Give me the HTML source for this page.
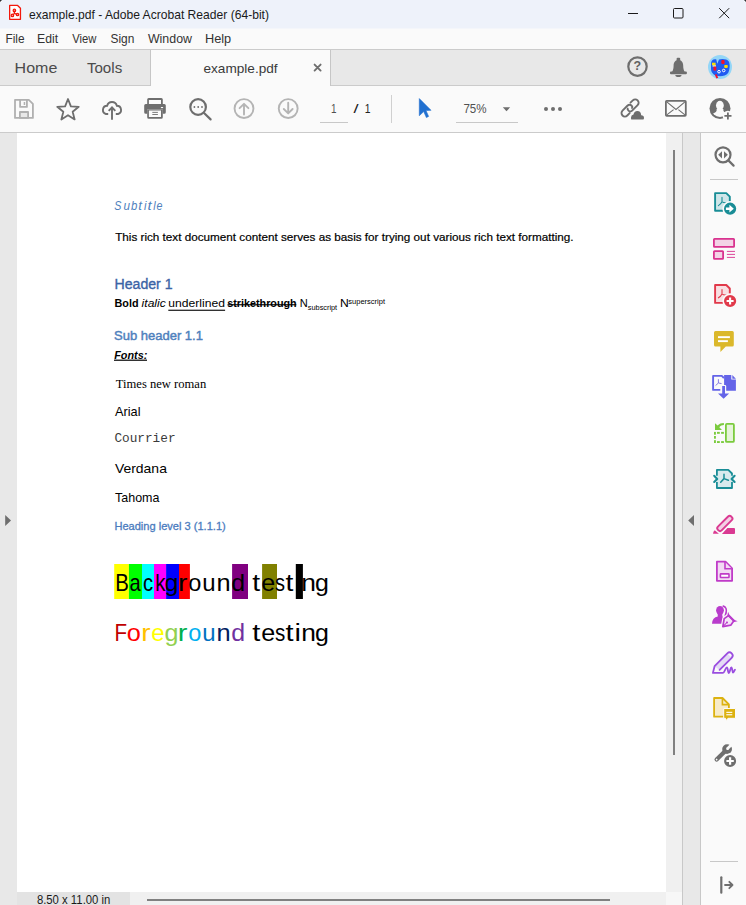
<!DOCTYPE html>
<html><head><meta charset="utf-8"><title>example.pdf - Adobe Acrobat Reader</title>
<style>html,body{margin:0;padding:0;width:746px;height:905px;overflow:hidden;background:#FAFAFA;font-family:"Liberation Sans",sans-serif}svg{position:absolute;left:0;top:0;display:block}</style>
</head><body>
<svg width="746" height="905" viewBox="0 0 746 905">
<g shape-rendering="crispEdges">
<rect x="0" y="0" width="746" height="28" fill="#EEF2FA" />
<rect x="0" y="28" width="746" height="1" fill="#F4F6FA" />
<rect x="0" y="29" width="746" height="20" fill="#FAFAFA" />
<rect x="0" y="49" width="746" height="1" fill="#CBCBCB" />
<rect x="0" y="50" width="746" height="35" fill="#E8E8E8" />
<rect x="0" y="85" width="746" height="1" fill="#CBCBCB" />
<rect x="150" y="50" width="1" height="36" fill="#C6C6C6" />
<rect x="151" y="50" width="179" height="36" fill="#FAFAFA" />
<rect x="330" y="50" width="1" height="36" fill="#C6C6C6" />
<rect x="0" y="86" width="746" height="46" fill="#FAFAFA" />
<rect x="0" y="132" width="746" height="1" fill="#CBCBCB" />
<rect x="0" y="133" width="17" height="772" fill="#E8E8E8" />
<rect x="17" y="133" width="649" height="759" fill="#FFFFFF" />
<rect x="666" y="133" width="16" height="772" fill="#F0F0F0" />
<rect x="682" y="133" width="1" height="772" fill="#C8C8C8" />
<rect x="683" y="133" width="17" height="772" fill="#E8E8E8" />
<rect x="700" y="133" width="1" height="772" fill="#C8C8C8" />
<rect x="701" y="133" width="45" height="772" fill="#FAFAFA" />
<rect x="17" y="892" width="113" height="13" fill="#E3E3E3" />
<rect x="130" y="892" width="536" height="13" fill="#F0F0F0" />
<rect x="666" y="892" width="16" height="13" fill="#F7F7F7" />
<rect x="673" y="150" width="2" height="605" fill="#808080" />
<rect x="147" y="899" width="463" height="2" fill="#808080" />
<rect x="320" y="122" width="28" height="1" fill="#C8C8C8" />
<rect x="456" y="122" width="62" height="1" fill="#C8C8C8" />
<rect x="391" y="95" width="1" height="28" fill="#D0D0D0" />
<rect x="710" y="179" width="28" height="1" fill="#C8C8C8" />
<rect x="710" y="861" width="28" height="1" fill="#C8C8C8" />
<rect x="0" y="0" width="1" height="1" fill="#303030" />
<rect x="1" y="0" width="1" height="1" fill="#8A8C90" />
<rect x="0" y="1" width="1" height="1" fill="#8A8C90" />
<rect x="1" y="1" width="1" height="1" fill="#FBFCFF" />
<rect x="745" y="0" width="1" height="1" fill="#303030" />
<rect x="744" y="0" width="1" height="1" fill="#8A8C90" />
<rect x="745" y="1" width="1" height="1" fill="#8A8C90" />
<rect x="744" y="1" width="1" height="1" fill="#FBFCFF" />
</g>
<g fill="none" stroke="#F2180C" stroke-width="1.3" stroke-linejoin="round"><path d="M9.65,5.45 H17.6 L20.45,8.3 V19.35 H9.65 Z" fill="#fff"/></g>
<g stroke="#F2180C" stroke-width="1.3" fill="none"><path d="M14.4,13.4 L14.4,10.4 M14.4,13.4 L12.5,15.4 M14.4,13.4 L17.4,14.5"/><circle cx="14.4" cy="10.4" r="1.2"/><circle cx="12.4" cy="15.4" r="1.2"/><circle cx="17.5" cy="14.5" r="1.2"/></g>
<text x="28.92" y="18.60" font-family="Liberation Sans" font-size="12.46" fill="#1A1A1A" textLength="240.07" lengthAdjust="spacingAndGlyphs" >example.pdf - Adobe Acrobat Reader (64-bit)</text>
<g stroke="#1A1A1A" stroke-width="1" fill="none"><path d="M628,13.5 H638"/><rect x="673.5" y="8.5" width="9.5" height="9.5" rx="1"/><path d="M719.2,8.2 L729.2,18.2 M729.2,8.2 L719.2,18.2"/></g>
<text x="5.45" y="42.90" font-family="Liberation Sans" font-size="12.03" fill="#333333" textLength="19.10" lengthAdjust="spacingAndGlyphs" >File</text>
<text x="37.02" y="42.90" font-family="Liberation Sans" font-size="12.03" fill="#333333" textLength="21.08" lengthAdjust="spacingAndGlyphs" >Edit</text>
<text x="72.34" y="42.90" font-family="Liberation Sans" font-size="12.03" fill="#333333" textLength="24.15" lengthAdjust="spacingAndGlyphs" >View</text>
<text x="110.46" y="42.90" font-family="Liberation Sans" font-size="12.03" fill="#333333" textLength="23.83" lengthAdjust="spacingAndGlyphs" >Sign</text>
<text x="147.94" y="42.90" font-family="Liberation Sans" font-size="12.03" fill="#333333" textLength="44.02" lengthAdjust="spacingAndGlyphs" >Window</text>
<text x="204.98" y="42.90" font-family="Liberation Sans" font-size="12.03" fill="#333333" textLength="26.25" lengthAdjust="spacingAndGlyphs" >Help</text>
<text x="14.62" y="72.90" font-family="Liberation Sans" font-size="15.36" fill="#4B4B4B" textLength="42.74" lengthAdjust="spacingAndGlyphs" >Home</text>
<text x="86.90" y="72.90" font-family="Liberation Sans" font-size="15.36" fill="#4B4B4B" textLength="35.33" lengthAdjust="spacingAndGlyphs" >Tools</text>
<text x="203.46" y="72.50" font-family="Liberation Sans" font-size="13.33" fill="#3A3A3A" textLength="74.12" lengthAdjust="spacingAndGlyphs" >example.pdf</text>
<path d="M314.6,64.6 L320.6,70.6 M320.6,64.6 L314.6,70.6" stroke="#6E6E6E" stroke-width="1.9" stroke-linecap="round"/>
<circle cx="637.5" cy="66.6" r="9.2" fill="none" stroke="#6E6E6E" stroke-width="2.2"/>
<text x="633.64" y="70.40" font-family="Liberation Sans" font-size="11.88" font-weight="bold" fill="#606060" textLength="7.67" lengthAdjust="spacingAndGlyphs" >?</text>
<g fill="#6E6E6E"><rect x="676.6" y="57.8" width="3.6" height="3" rx="1"/><path d="M671.8,72.5 C673.3,70.5 673.6,67.5 673.6,65.5 C673.6,61.8 675.6,59.9 678.4,59.9 C681.2,59.9 683.2,61.8 683.2,65.5 C683.2,67.5 683.5,70.5 685,72.5 Z"/><rect x="670" y="71.4" width="16.9" height="2.8" rx="1"/><path d="M675.3,75 H681.5 A3.1,2 0 0 1 675.3,75 Z"/></g>
<g><circle cx="720" cy="67" r="12" fill="#94D6F7"/><path d="M711,64 C711,61 712.5,59.2 715,59.2 L716.2,59.2 L717.3,63.8 L719,59.6 C722,58.6 727,59 728.8,61.5 C730.2,64 729.9,70 728.1,73 C726,75.6 722,76.6 718,76.1 C714,75.6 711.2,73 711,69 Z" fill="#1F5BF2"/><rect x="712" y="62.7" width="3.6" height="2.6" fill="#FFE000"/><rect x="712.6" y="65.3" width="3.4" height="1.4" fill="#FFFFB0"/><rect x="713.5" y="66.6" width="2.8" height="4" fill="#F5102A"/><rect x="721.3" y="60" width="3.3" height="4" rx="1" fill="#F5102A"/><rect x="724.2" y="65.1" width="3.6" height="2.8" rx="0.8" fill="#FFDA00"/><path d="M715.7,74.3 L717.3,78.2" stroke="#F5102A" stroke-width="1.9"/><circle cx="719" cy="71.7" r="1.3" fill="none" stroke="#fff" stroke-width="1"/><circle cx="723.7" cy="70.5" r="1.3" fill="none" stroke="#fff" stroke-width="1"/></g>
<g fill="none" stroke="#B0B0B0" stroke-width="1.8" stroke-linejoin="round"><path d="M15,99.8 H28.8 L32.9,103.9 V117.9 H15 Z"/><path d="M20.1,99.8 V106.9 H26.9 V99.8"/><rect x="19.9" y="112" width="8.2" height="5.9" fill="#E8E8E8"/></g>
<rect x="23.7" y="102" width="1.5" height="3" fill="#B0B0B0"/>
<path d="M68.00,99.00 L70.88,106.34 L78.75,106.81 L72.66,111.81 L74.64,119.44 L68.00,115.20 L61.36,119.44 L63.34,111.81 L57.25,106.81 L65.12,106.34 Z" fill="none" stroke="#6E6E6E" stroke-width="1.8" stroke-linejoin="round"/>
<g stroke="#6E6E6E" stroke-width="1.9" fill="none" stroke-linecap="butt"><path d="M108.2,114 H105.9 A4.2,4.2 0 0 1 107.14,105.79 A5,5 0 0 1 116.86,105.79 A4.2,4.2 0 0 1 118.1,114 H115.8"/><path d="M112,119.8 V107.3 M108.7,110.8 L112,107.3 L115.3,110.8" stroke-linejoin="miter"/></g>
<g fill="#6E6E6E"><path d="M147.2,104.5 V99.5 Q147.2,98 148.7,98 H161.3 Q162.8,98 162.8,99.5 V104.5 H161 V99.9 H148.9 V104.5 Z"/><path d="M145.7,104 H164.3 Q165.8,104 165.8,105.5 V112.3 Q165.8,113.8 164.3,113.8 H162.8 V109.6 H147.2 V113.8 H145.7 Q144.2,113.8 144.2,112.3 V105.5 Q144.2,104 145.7,104 Z"/><path d="M147.2,109.6 H162.8 V117.3 Q162.8,118.8 161.3,118.8 H148.7 Q147.2,118.8 147.2,117.3 Z M148.9,110.6 V117 H161 V110.6 Z" fill-rule="evenodd"/><rect x="152.3" y="111.9" width="5.6" height="0.9"/><rect x="152.3" y="114" width="5.6" height="0.9"/></g>
<rect x="160.9" y="107" width="2.2" height="1.1" fill="#FAFAFA"/>
<g stroke="#6E6E6E" stroke-width="2.2" fill="none" stroke-linecap="round"><circle cx="198.1" cy="107" r="7.8"/><path d="M204.3,113.3 L210.6,119.4"/></g>
<g fill="#6E6E6E"><circle cx="194.4" cy="107" r="0.9"/><circle cx="198.2" cy="107" r="0.9"/><circle cx="202" cy="107" r="0.9"/></g>
<g stroke="#B4B4B4" stroke-width="1.9" fill="none"><circle cx="244" cy="108.6" r="9.45"/><path d="M244,114.5 V104.2 M239.6,108.2 L244,103.8 L248.4,108.2" stroke-linecap="round" stroke-linejoin="round"/><circle cx="288.2" cy="108.6" r="9.45"/><path d="M288.2,102.7 V113 M283.8,109 L288.2,113.4 L292.6,109" stroke-linecap="round" stroke-linejoin="round"/></g>
<text x="330.96" y="113.30" font-family="Liberation Sans" font-size="13.04" fill="#505050" textLength="5.50" lengthAdjust="spacingAndGlyphs" >1</text>
<text x="353.40" y="113.30" font-family="Liberation Sans" font-size="13.04" fill="#222" textLength="5.06" lengthAdjust="spacingAndGlyphs" >/</text>
<text x="364.72" y="113.30" font-family="Liberation Sans" font-size="13.04" fill="#222" textLength="5.75" lengthAdjust="spacingAndGlyphs" >1</text>
<path d="M419.3,98.6 L431,110.3 L426,110.6 L428.6,116.4 L426.4,117.6 L423.7,111.6 L419.3,115.7 Z" fill="#2170D0" stroke="#2170D0" stroke-width="0.6" stroke-linejoin="round"/>
<text x="463.42" y="113.30" font-family="Liberation Sans" font-size="13.04" fill="#505050" textLength="23.20" lengthAdjust="spacingAndGlyphs" >75%</text>
<path d="M502.8,107.2 H510.2 L506.5,111.2 Z" fill="#6E6E6E"/>
<g fill="#6E6E6E"><circle cx="546" cy="109" r="2"/><circle cx="553" cy="109" r="2"/><circle cx="560" cy="109" r="2"/></g>
<g transform="translate(630.06,107.9) rotate(-45)" fill="none" stroke="#6E6E6E" stroke-width="1.9" stroke-linecap="round"><path d="M4,-3.4 H7.3 A3.4,3.4 0 0 1 7.3,3.4 H-0.5 C-2.2,3.4 -3.1,2.2 -3.0,0.8 C-3.0,-0.3 -2.7,-1.1 -2.2,-1.2"/><path d="M-4,3.4 H-7.3 A3.4,3.4 0 0 1 -7.3,-3.4 H-0.4 C1.5,-3.4 2.7,-2.0 2.7,-0.4 C2.7,0.7 2.1,1.3 1.4,1.4"/></g>
<path d="M631.3,119.6 H643 Q644,119.6 644,118 Q644,115.5 641.2,115.3 Q641,111 637.3,111 Q634.2,111 633.5,114.5 Q631,114.8 631,117.5 Q631,119.6 631.3,119.6 Z" fill="#FAFAFA" stroke="#FAFAFA" stroke-width="2.6"/>
<path d="M631.3,119.6 H643 Q644,119.6 644,118 Q644,115.5 641.2,115.3 Q641,111 637.3,111 Q634.2,111 633.5,114.5 Q631,114.8 631,117.5 Q631,119.6 631.3,119.6 Z" fill="#6E6E6E"/>
<g fill="none" stroke="#6E6E6E"><rect x="665.9" y="100.9" width="19.9" height="14.9" rx="0.8" stroke-width="1.8"/><path d="M666.8,101.8 L676,109.5 L684.9,101.8 M666.8,114.9 L673.6,109.6 M684.9,114.9 L678.4,109.6" stroke-width="1.1"/></g>
<defs><clipPath id="pc"><circle cx="720" cy="108.5" r="8.5"/></clipPath></defs>
<circle cx="720" cy="108.5" r="10.5" fill="#6E6E6E"/>
<g fill="#FAFAFA" clip-path="url(#pc)"><ellipse cx="719.9" cy="105.5" rx="3.9" ry="4.7"/><path d="M716.5,109 Q717.5,112 713,113.5 Q709,115 709,120 H731 Q731,115 727,113.5 Q722.5,112 723.5,109 Z"/></g>
<circle cx="727.9" cy="115.9" r="5.2" fill="#FAFAFA"/>
<path d="M724.4,115.9 H731.5 M727.9,112.4 V119.5" stroke="#6E6E6E" stroke-width="1.8"/>
<path d="M5.2,515 L11,520.5 L5.2,526 Z" fill="#6E6E6E"/>
<path d="M694,515 L688.2,520.5 L694,526 Z" fill="#6E6E6E"/>
<g stroke="#6E6E6E" stroke-width="2.2" fill="none" stroke-linecap="round"><circle cx="723" cy="154.8" r="7.5"/><path d="M728.6,160.6 L733.6,165.6"/></g>
<g fill="#6E6E6E"><path d="M722,151.2 V158.4 L718.2,154.8 Z"/><path d="M724,151.2 V158.4 L727.8,154.8 Z"/></g>
<path d="M715.1,193.1 H726.3 L729.8,196.6 V210.7 H715.1 Z" fill="#CFE6E9" stroke="#198D96" stroke-width="1.9" stroke-linejoin="round"/>
<path d="M722,197.4 V201.8 C721.2,203.4 719.9,204.7 718.4,205.6 M722.2,201.9 C723.5,202.8 725,203 726.6,202.6" fill="none" stroke="#198D96" stroke-width="1.1" stroke-linecap="round"/>
<circle cx="730.1" cy="208.7" r="6.9" fill="#198D96" stroke="#FAFAFA" stroke-width="1.6"/>
<path d="M725.9,207.5 H729.4 V204.8 L733.8,208.7 L729.4,212.6 V209.9 H725.9 Z" fill="#fff"/>
<g stroke="#D9338F" stroke-width="1.8" fill="#F3D3E6"><rect x="713.9" y="238.8" width="20.2" height="8" rx="0.6"/><rect x="713.9" y="251.2" width="9.2" height="7.7" rx="0.6"/></g>
<g fill="#D9338F"><rect x="726.9" y="250.9" width="8.1" height="0.9"/><rect x="726.9" y="253.9" width="8.1" height="0.9"/><rect x="726.9" y="256.9" width="8.1" height="0.9"/></g>
<path d="M715.1,285 H726.3 L729.8,288.5 V302.9 H715.1 Z" fill="#F8DFE2" stroke="#E1394A" stroke-width="1.9" stroke-linejoin="round"/>
<path d="M722,289.5 V294 C721.2,295.6 719.9,296.9 718.4,297.8 M722.2,294.1 C723.5,295 725,295.2 726.6,294.8" fill="none" stroke="#E1394A" stroke-width="1.1" stroke-linecap="round"/>
<circle cx="730.1" cy="301" r="6.9" fill="#E1394A" stroke="#FAFAFA" stroke-width="1.6"/>
<path d="M726.6,301 H733.6 M730.1,297.5 V304.5" stroke="#fff" stroke-width="2.1"/>
<path d="M715.5,331 H732.3 Q733.8,331 733.8,332.5 V345.1 Q733.8,346.6 732.3,346.6 H725.8 L720.4,352 V346.6 H715.5 Q714,346.6 714,345.1 V332.5 Q714,331 715.5,331 Z" fill="#DBB82B"/>
<g fill="#fff"><rect x="718" y="336.2" width="11.9" height="1.9"/><rect x="718" y="340.2" width="9.9" height="1.9"/></g>
<path d="M720.3,389.9 H713.1 V375.9 H721.8 L723.9,378" fill="none" stroke="#6464E8" stroke-width="1.9" stroke-linejoin="round"/>
<path d="M718.4,379.2 V383 L715.6,385.5 M718.4,383 L721.6,383.6" fill="none" stroke="#7A6FE0" stroke-width="0.9"/>
<path d="M724.1,374.9 H731.3 V379.5 H735.9 V390.8 H724.1 Z" fill="#6464E8"/>
<path d="M732.3,374.9 L735.9,378.7 H732.3 Z" fill="#6464E8"/>
<path d="M722.2,386.1 H725 V393.4 H729.1 L723.6,398.8 L718,393.4 H722.2 Z" fill="#FAFAFA" stroke="#FAFAFA" stroke-width="2.4" stroke-linejoin="round"/>
<path d="M722.2,386.1 H725 V393.4 H729.1 L723.6,398.8 L718,393.4 H722.2 Z" fill="#6464E8"/>
<rect x="725.9" y="423.9" width="8" height="18" rx="1" fill="#E6F4DA" stroke="#7BCB3E" stroke-width="1.8"/>
<g fill="#7BCB3E"><rect x="714" y="431.9" width="1.9" height="2.8"/><rect x="714" y="436" width="1.9" height="2.7"/><rect x="714" y="440.2" width="1.9" height="2.8"/><rect x="717" y="431.9" width="2.8" height="1.9"/><rect x="721.1" y="431.9" width="2.8" height="1.9"/><rect x="717" y="441.1" width="2.8" height="1.9"/><rect x="721.1" y="441.1" width="2.8" height="1.9"/><path d="M715,423.2 L717.6,425.6 C719.2,423.9 721.2,423.1 723.9,423.1 V424.9 C722,424.9 720.4,425.7 719.3,427.3 L722,430 H715 Z"/></g>
<path d="M716.9,469.7 H728.3 L732.1,473.5 V487.9 H716.9 Z" fill="#D8EAED"/>
<g fill="none" stroke="#198D96" stroke-width="1.8" stroke-linejoin="round"><path d="M716.9,475.8 V469.8 H728.3 L732,473.5 V475.8"/><path d="M716.9,482 V488 H732 V482"/></g>
<path d="M724,474.3 V478.6 L720.7,482.3 M724,478.6 L728.4,480.2" fill="none" stroke="#198D96" stroke-width="1.5" stroke-linecap="round"/>
<g fill="none" stroke="#198D96" stroke-width="2.1" stroke-linecap="round" stroke-linejoin="round"><path d="M714.2,475.8 L717.2,478.9 L714.2,482"/><path d="M734.6,475.8 L731.6,478.9 L734.6,482"/></g>
<g transform="translate(725,523.3) rotate(-45)"><rect x="-9.6" y="-2.6" width="18.8" height="5.2" rx="2.2" fill="#F3D0E4" stroke="#DA3A92" stroke-width="1.9"/></g>
<path d="M713,533.8 Q713.2,531.5 714.7,530.2 L718.9,533.8 Z" fill="#DA3A92"/>
<path d="M727.4,528 H734 Q735,528 735,529 V533 Q735,534 734,534 H721.9 Z" fill="#DA3A92"/>
<path d="M716.9,561.7 H725.5 L732.1,568.3 V580.8 H716.9 Z" fill="#F2DAF3" stroke="#C03BC8" stroke-width="1.8" stroke-linejoin="round"/>
<path d="M725,562 V568.8 H731.8" fill="#F2DAF3" stroke="#C03BC8" stroke-width="1.6"/>
<rect x="720.4" y="573.9" width="8.6" height="3.6" rx="0.5" fill="#fff" stroke="#C03BC8" stroke-width="1.6"/>
<g fill="#B93CCC"><ellipse cx="720" cy="610.3" rx="3.9" ry="4.4"/><path d="M717.6,613 L717.8,616.6 Q712.3,617.6 712,623.7 H722.6 L725.3,617.6 Q723,617 722.3,616.6 L722.4,613 Z"/></g>
<path d="M723.3,606.1 C725.9,606.8 726.8,609.8 726.1,612.6 C725.7,614.1 725.3,615.2 725.3,616.4" fill="none" stroke="#FAFAFA" stroke-width="3"/>
<path d="M723.3,606.1 C725.9,606.8 726.8,609.8 726.1,612.6 C725.7,614.1 725.3,615.2 725.3,616.4" fill="none" stroke="#B93CCC" stroke-width="1.7" stroke-linecap="round"/>
<g transform="translate(727.9,621.5) rotate(45)"><path d="M0,7.2 L-4.6,0.6 L-3.7,-5 H3.7 L4.6,0.6 Z" fill="#FAFAFA" stroke="#FAFAFA" stroke-width="4"/><path d="M0,7.2 L-4.6,0.6 L-3.7,-5 H3.7 L4.6,0.6 Z" fill="#F6E6F8" stroke="#B93CCC" stroke-width="1.7" stroke-linejoin="round"/><path d="M0,6.5 V2.2" stroke="#B93CCC" stroke-width="1"/><circle cx="0" cy="1.3" r="1" fill="#B93CCC"/><path d="M-5.4,-5.9 L-3.3,-5 H3.3 L5.4,-5.9 L4.2,-4.2 H-4.2 Z" fill="#B93CCC" stroke="#B93CCC" stroke-width="1"/></g>
<path d="M714.6,666.2 L727.3,653.4 L731.7,657.8 L719.6,669.9 Z" fill="#E4DAF5"/>
<path d="M719.6,669.9 L731.7,657.8 A3.1,3.1 0 0 0 727.3,653.4 L714.6,666.2 L712.9,672.9 H723 C724.5,672.9 725.5,667.4 726.9,667.4 C728,667.4 727.8,673 728.8,673 C730,673 730.2,667.4 731.4,667.4 C732.4,667.4 732.2,672.6 733,672.6 C733.8,672.6 734.3,670.3 735,669.8" fill="none" stroke="#9A4DE0" stroke-width="1.8" stroke-linecap="round" stroke-linejoin="round"/>
<path d="M714.1,698 H722.5 L728.9,704.4 V716.7 H714.1 Z" fill="#F7EBC8" stroke="#DCB210" stroke-width="1.8" stroke-linejoin="round"/>
<path d="M722.4,698.3 V704.6 H728.6" fill="none" stroke="#DCB210" stroke-width="1.6"/>
<path d="M723.7,708.5 H735.5 V718.3 H728 L725.5,721 V718.3 H723.7 Z" fill="#DCB210" stroke="#FAFAFA" stroke-width="1"/>
<g fill="#fff"><rect x="726.3" y="711.8" width="6" height="1.1"/><rect x="726.3" y="714.2" width="6" height="1.1"/></g>
<g transform="translate(727.1,749.1) rotate(-45)"><circle cx="0" cy="0" r="4.9" fill="#6E6E6E"/><rect x="-16.9" y="-2.1" width="15" height="4.2" rx="2.1" fill="#6E6E6E"/><rect x="0.4" y="-1.35" width="6" height="2.7" fill="#FAFAFA"/><circle cx="0.6" cy="0" r="1.35" fill="#FAFAFA"/><circle cx="-14.8" cy="0" r="0.9" fill="#FAFAFA"/></g>
<circle cx="730.1" cy="761" r="6.8" fill="#6E6E6E" stroke="#FAFAFA" stroke-width="1.6"/>
<path d="M726.4,761 H733.8 M730.1,757.3 V764.7" stroke="#fff" stroke-width="2.2"/>
<g stroke="#6E6E6E" fill="none"><path d="M721.3,877.3 V892.7" stroke-width="2.2" stroke-linecap="round"/><path d="M725,885 H732.5 M729.3,881.8 L732.5,885 L729.3,888.2" stroke-width="1.8" stroke-linecap="round" stroke-linejoin="round"/></g>
<text x="114.33" y="210.4" font-family="Liberation Sans" font-size="12.60" font-style="italic" fill="#4F81BD" textLength="7.14" lengthAdjust="spacingAndGlyphs">S</text>
<text x="123.43" y="210.4" font-family="Liberation Sans" font-size="12.60" font-style="italic" fill="#4F81BD" textLength="6.52" lengthAdjust="spacingAndGlyphs">u</text>
<text x="131.03" y="210.4" font-family="Liberation Sans" font-size="12.60" font-style="italic" fill="#4F81BD" textLength="6.33" lengthAdjust="spacingAndGlyphs">b</text>
<text x="138.20" y="210.4" font-family="Liberation Sans" font-size="12.60" font-style="italic" fill="#4F81BD" textLength="3.70" lengthAdjust="spacingAndGlyphs">t</text>
<text x="144.03" y="210.4" font-family="Liberation Sans" font-size="12.60" font-style="italic" fill="#4F81BD" textLength="2.51" lengthAdjust="spacingAndGlyphs">i</text>
<text x="147.53" y="210.4" font-family="Liberation Sans" font-size="12.60" font-style="italic" fill="#4F81BD" textLength="4.12" lengthAdjust="spacingAndGlyphs">t</text>
<text x="153.14" y="210.4" font-family="Liberation Sans" font-size="12.60" font-style="italic" fill="#4F81BD" textLength="2.42" lengthAdjust="spacingAndGlyphs">l</text>
<text x="156.48" y="210.4" font-family="Liberation Sans" font-size="12.60" font-style="italic" fill="#4F81BD" textLength="5.96" lengthAdjust="spacingAndGlyphs">e</text>
<text x="115.17" y="240.70" font-family="Liberation Sans" font-size="11.45" fill="#000" textLength="458.43" lengthAdjust="spacingAndGlyphs"  stroke="#000" stroke-width="0.2">This rich text document content serves as basis for trying out various rich text formatting.</text>
<text x="114.47" y="289.10" font-family="Liberation Sans" font-size="14.49" fill="#3A63A5" textLength="58.15" lengthAdjust="spacingAndGlyphs"  stroke="#3A63A5" stroke-width="0.35">Header 1</text>
<text x="114.50" y="307.40" font-family="Liberation Sans" font-size="10.87" font-weight="bold" fill="#000" textLength="24.02" lengthAdjust="spacingAndGlyphs" >Bold</text>
<text x="141.62" y="307.40" font-family="Liberation Sans" font-size="10.87" font-style="italic" fill="#000" textLength="24.11" lengthAdjust="spacingAndGlyphs" >italic</text>
<text x="168.31" y="307.40" font-family="Liberation Sans" font-size="10.87" fill="#000" textLength="56.58" lengthAdjust="spacingAndGlyphs" >underlined</text>
<rect x="168.3" y="309.7" width="56.79999999999998" height="1.1000000000000227" fill="#000" />
<text x="227.32" y="307.40" font-family="Liberation Sans" font-size="10.87" font-weight="bold" fill="#000" textLength="69.32" lengthAdjust="spacingAndGlyphs" >strikethrough</text>
<rect x="227.5" y="304.2" width="68.80000000000001" height="1.1000000000000227" fill="#000" />
<text x="299.71" y="307.40" font-family="Liberation Sans" font-size="10.87" fill="#000" textLength="8.00" lengthAdjust="spacingAndGlyphs" >N</text>
<text x="307.88" y="310.00" font-family="Liberation Sans" font-size="7.25" fill="#000" textLength="29.27" lengthAdjust="spacingAndGlyphs" >subscript</text>
<text x="340.03" y="307.40" font-family="Liberation Sans" font-size="10.87" fill="#000" textLength="8.77" lengthAdjust="spacingAndGlyphs" >N</text>
<text x="348.27" y="304.00" font-family="Liberation Sans" font-size="7.25" fill="#000" textLength="36.77" lengthAdjust="spacingAndGlyphs" >superscript</text>
<text x="114.01" y="339.90" font-family="Liberation Sans" font-size="13.04" fill="#4F81BD" textLength="88.96" lengthAdjust="spacingAndGlyphs"  stroke="#4F81BD" stroke-width="0.45">Sub header 1.1</text>
<text x="114.18" y="358.70" font-family="Liberation Sans" font-size="11.30" font-weight="bold" font-style="italic" fill="#000" textLength="33.11" lengthAdjust="spacingAndGlyphs" >Fonts:</text>
<rect x="114" y="359.6" width="33" height="1.1999999999999886" fill="#000" />
<text x="115.85" y="388.00" font-family="Liberation Serif" font-size="12.82" fill="#000" textLength="90.34" lengthAdjust="spacingAndGlyphs" >Times new roman</text>
<text x="115.10" y="416.00" font-family="Liberation Sans" font-size="13.04" fill="#000" textLength="25.43" lengthAdjust="spacingAndGlyphs" >Arial</text>
<text x="114.40" y="442.00" font-family="Liberation Mono" font-size="12.58" fill="#3A3A3A" textLength="61.16" lengthAdjust="spacingAndGlyphs" >Courrier</text>
<text x="114.93" y="473.00" font-family="Liberation Sans" font-size="13.04" fill="#000" textLength="51.98" lengthAdjust="spacingAndGlyphs" >Verdana</text>
<text x="115.05" y="502.00" font-family="Liberation Sans" font-size="13.04" fill="#000" textLength="44.38" lengthAdjust="spacingAndGlyphs" >Tahoma</text>
<text x="114.41" y="530.00" font-family="Liberation Sans" font-size="11.45" fill="#4A7BBE" textLength="111.37" lengthAdjust="spacingAndGlyphs"  stroke="#4A7BBE" stroke-width="0.3">Heading level 3 (1.1.1)</text>
<rect x="114.2" y="564" width="14.7" height="35" fill="#FFFF00"/>
<rect x="128.9" y="564" width="13.1" height="35" fill="#00FF00"/>
<rect x="142" y="564" width="12.0" height="35" fill="#00FFFF"/>
<rect x="154" y="564" width="12.1" height="35" fill="#FF00FF"/>
<rect x="166.1" y="564" width="12.9" height="35" fill="#0000FF"/>
<rect x="179" y="564" width="10.9" height="35" fill="#FF0000"/>
<rect x="232.1" y="564" width="15.9" height="35" fill="#800080"/>
<rect x="262.1" y="564" width="14.9" height="35" fill="#808000"/>
<rect x="295.8" y="564" width="7.1" height="35" fill="#000000"/>
<text x="115.17" y="590.7" font-family="Liberation Sans" font-size="23.6" fill="#000" textLength="13.59" lengthAdjust="spacingAndGlyphs">B</text>
<text x="129.58" y="590.7" font-family="Liberation Sans" font-size="23.6" fill="#000" textLength="11.16" lengthAdjust="spacingAndGlyphs">a</text>
<text x="142.99" y="590.7" font-family="Liberation Sans" font-size="23.6" fill="#000" textLength="10.11" lengthAdjust="spacingAndGlyphs">c</text>
<text x="155.27" y="590.7" font-family="Liberation Sans" font-size="23.6" fill="#000" textLength="10.23" lengthAdjust="spacingAndGlyphs">k</text>
<text x="164.60" y="590.7" font-family="Liberation Sans" font-size="23.6" fill="#000" textLength="13.97" lengthAdjust="spacingAndGlyphs">g</text>
<text x="177.97" y="590.7" font-family="Liberation Sans" font-size="23.6" fill="#000" textLength="9.43" lengthAdjust="spacingAndGlyphs">r</text>
<text x="188.36" y="590.7" font-family="Liberation Sans" font-size="23.6" fill="#000" textLength="13.11" lengthAdjust="spacingAndGlyphs">o</text>
<text x="202.24" y="590.7" font-family="Liberation Sans" font-size="23.6" fill="#000" textLength="13.35" lengthAdjust="spacingAndGlyphs">u</text>
<text x="216.55" y="590.7" font-family="Liberation Sans" font-size="23.6" fill="#000" textLength="14.13" lengthAdjust="spacingAndGlyphs">n</text>
<text x="231.20" y="590.7" font-family="Liberation Sans" font-size="23.6" fill="#000" textLength="13.84" lengthAdjust="spacingAndGlyphs">d</text>
<text x="252.36" y="590.7" font-family="Liberation Sans" font-size="23.6" fill="#000" textLength="7.87" lengthAdjust="spacingAndGlyphs">t</text>
<text x="261.30" y="590.7" font-family="Liberation Sans" font-size="23.6" fill="#000" textLength="13.96" lengthAdjust="spacingAndGlyphs">e</text>
<text x="275.04" y="590.7" font-family="Liberation Sans" font-size="23.6" fill="#000" textLength="10.03" lengthAdjust="spacingAndGlyphs">s</text>
<text x="285.61" y="590.7" font-family="Liberation Sans" font-size="23.6" fill="#000" textLength="7.87" lengthAdjust="spacingAndGlyphs">t</text>
<text x="294.58" y="590.7" font-family="Liberation Sans" font-size="23.6" fill="#000" textLength="6.29" lengthAdjust="spacingAndGlyphs">i</text>
<text x="301.39" y="590.7" font-family="Liberation Sans" font-size="23.6" fill="#000" textLength="14.66" lengthAdjust="spacingAndGlyphs">n</text>
<text x="315.00" y="590.7" font-family="Liberation Sans" font-size="23.6" fill="#000" textLength="13.84" lengthAdjust="spacingAndGlyphs">g</text>
<text x="114.51" y="641" font-family="Liberation Sans" font-size="24.2" fill="#C00000" textLength="12.57" lengthAdjust="spacingAndGlyphs">F</text>
<text x="126.89" y="641" font-family="Liberation Sans" font-size="24.2" fill="#FF0000" textLength="14.05" lengthAdjust="spacingAndGlyphs">o</text>
<text x="141.28" y="641" font-family="Liberation Sans" font-size="24.2" fill="#FFC000" textLength="9.33" lengthAdjust="spacingAndGlyphs">r</text>
<text x="151.24" y="641" font-family="Liberation Sans" font-size="24.2" fill="#FFFF00" textLength="13.37" lengthAdjust="spacingAndGlyphs">e</text>
<text x="164.60" y="641" font-family="Liberation Sans" font-size="24.2" fill="#92D050" textLength="13.97" lengthAdjust="spacingAndGlyphs">g</text>
<text x="177.83" y="641" font-family="Liberation Sans" font-size="24.2" fill="#00B050" textLength="9.67" lengthAdjust="spacingAndGlyphs">r</text>
<text x="188.36" y="641" font-family="Liberation Sans" font-size="24.2" fill="#00B0F0" textLength="13.11" lengthAdjust="spacingAndGlyphs">o</text>
<text x="202.24" y="641" font-family="Liberation Sans" font-size="24.2" fill="#0070C0" textLength="13.35" lengthAdjust="spacingAndGlyphs">u</text>
<text x="216.55" y="641" font-family="Liberation Sans" font-size="24.2" fill="#002060" textLength="14.13" lengthAdjust="spacingAndGlyphs">n</text>
<text x="231.20" y="641" font-family="Liberation Sans" font-size="24.2" fill="#7030A0" textLength="13.84" lengthAdjust="spacingAndGlyphs">d</text>
<text x="252.26" y="641" font-family="Liberation Sans" font-size="24.2" fill="#000000" textLength="8.07" lengthAdjust="spacingAndGlyphs">t</text>
<text x="261.30" y="641" font-family="Liberation Sans" font-size="24.2" fill="#000000" textLength="13.96" lengthAdjust="spacingAndGlyphs">e</text>
<text x="274.91" y="641" font-family="Liberation Sans" font-size="24.2" fill="#000000" textLength="10.29" lengthAdjust="spacingAndGlyphs">s</text>
<text x="285.51" y="641" font-family="Liberation Sans" font-size="24.2" fill="#000000" textLength="8.07" lengthAdjust="spacingAndGlyphs">t</text>
<text x="294.51" y="641" font-family="Liberation Sans" font-size="24.2" fill="#000000" textLength="6.45" lengthAdjust="spacingAndGlyphs">i</text>
<text x="301.39" y="641" font-family="Liberation Sans" font-size="24.2" fill="#000000" textLength="14.66" lengthAdjust="spacingAndGlyphs">n</text>
<text x="315.00" y="641" font-family="Liberation Sans" font-size="24.2" fill="#000000" textLength="13.84" lengthAdjust="spacingAndGlyphs">g</text>
<text x="36.89" y="903.50" font-family="Liberation Sans" font-size="12.61" fill="#1A1A1A" textLength="73.46" lengthAdjust="spacingAndGlyphs" >8.50 x 11.00 in</text>
</svg>
</body></html>
